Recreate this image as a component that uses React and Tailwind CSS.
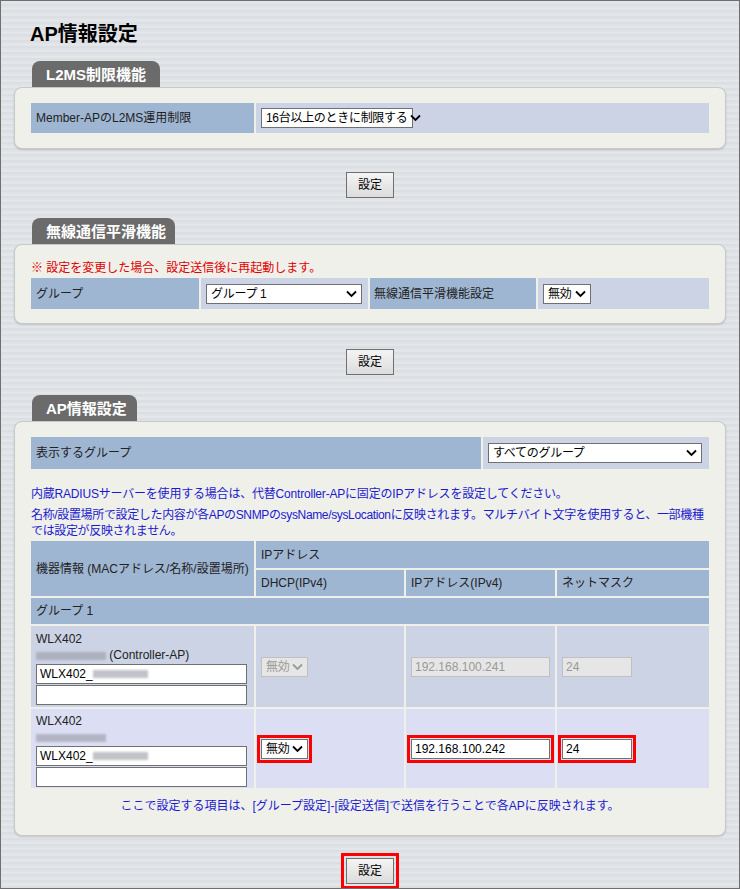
export default function App() {
  const font = { fontFamily: '"Liberation Sans","Noto Sans CJK JP",sans-serif' };
  const Tab = ({ children, w }) => (
    <div className={`ml-[18px] h-[26px] ${w} bg-[#6b6b6b] rounded-t-[8px] text-white font-bold text-[15px] flex items-center pl-[14px] leading-none`}>{children}</div>
  );
  const Panel = ({ children, cls = "" }) => (
    <div className={`bg-[#f0f0eb] border border-[#c8c8c8] rounded-[8px] shadow-[0_1px_2px_rgba(0,0,0,0.15)] px-[16px] ${cls}`}>{children}</div>
  );
  const Btn = () => (
    <button className="w-[48px] h-[26px] bg-gradient-to-b from-[#f4f4f4] to-[#dcdcdc] border border-[#707070] text-[12px] text-black">設定</button>
  );
  const Sel = ({ children, w, dis }) => (
    <div className={`h-[20px] ${w} shrink-0 whitespace-nowrap border ${dis ? "border-[#c0c0c0] bg-[#e6e6e6] text-[#999]" : "border-[#707070] bg-white text-black"} text-[12px] flex items-center justify-between gap-[3px] px-[4px]`}>
      <span className="tracking-[-0.3px]">{children}</span>
      <svg width="11" height="8" viewBox="0 0 11 8" className="shrink-0"><path d="M1 1.5 L5.5 6 L10 1.5" stroke={dis ? "#999" : "#000"} strokeWidth="1.8" fill="none" /></svg>
    </div>
  );
  const Inp = ({ children, w, dis }) => (
    <div className={`h-[20px] ${w} border ${dis ? "border-[#c0c0c0] bg-[#e6e6e6] text-[#999]" : "border-[#707070] bg-white text-black"} text-[12px] flex items-center px-[3px]`}>{children}</div>
  );
  const Blur = ({ w }) => <span className={`inline-block h-[8px] ${w} bg-[#9a9aa6] opacity-60 blur-[1px] align-middle`} />;
  return (
    <div style={font} className="w-[740px] h-[889px] overflow-hidden border border-[#6f6f6f] bg-[repeating-linear-gradient(180deg,#dfe2e6_0px,#e6e8eb_2px,#d8dbe0_4px,#e2e5e8_6px)] text-[12px] text-[#222]">
      <div className="pl-[29px] pt-[18px] h-[60px] text-[20px] font-bold text-black">AP情報設定</div>
      <div className="px-[13px]">
        <Tab w="w-[128px]">L2MS制限機能</Tab>
        <Panel cls="py-[15px]">
          <div className="flex h-[30px] gap-[2px]">
            <div className="w-[223px] bg-[#9fb6d2] flex items-center pl-[5px]">Member-APのL2MS運用制限</div>
            <div className="flex-1 bg-[#cbd3e5] flex items-center pl-[5px]"><Sel w="w-[152px]">16台以上のときに制限する</Sel></div>
          </div>
        </Panel>
        <div className="flex justify-center mt-[23px] mb-[20px]"><Btn /></div>
        <Tab w="w-[143px]">無線通信平滑機能</Tab>
        <Panel cls="pt-[14px] pb-[14px]">
          <div className="text-[#e00000] h-[19px]">※ 設定を変更した場合、設定送信後に再起動します。</div>
          <div className="flex h-[31px] gap-[2px]">
            <div className="w-[168px] bg-[#9fb6d2] flex items-center pl-[5px]">グループ</div>
            <div className="w-[167px] bg-[#cbd3e5] flex items-center pl-[5px]"><Sel w="w-[156px]">グループ 1</Sel></div>
            <div className="w-[166px] bg-[#9fb6d2] flex items-center pl-[4px]">無線通信平滑機能設定</div>
            <div className="flex-1 bg-[#cbd3e5] flex items-center pl-[5px]"><Sel w="w-[48px]">無効</Sel></div>
          </div>
        </Panel>
        <div className="flex justify-center mt-[25px] mb-[20px]"><Btn /></div>
        <Tab w="w-[105px]">AP情報設定</Tab>
        <Panel cls="pt-[15px] pb-[20px]">
          <div className="flex h-[32px] gap-[2px]">
            <div className="w-[450px] bg-[#9fb6d2] flex items-center pl-[5px]">表示するグループ</div>
            <div className="flex-1 bg-[#cbd3e5] flex items-center pl-[5px]"><Sel w="w-[214px]">すべてのグループ</Sel></div>
          </div>
          <div className="text-[#1a1ad0] mt-[17px] leading-[16px] tracking-[-0.2px]">内蔵RADIUSサーバーを使用する場合は、代替Controller-APに固定のIPアドレスを設定してください。</div>
          <div className="text-[#1a1ad0] mt-[5px] leading-[16px] tracking-[-0.35px]">名称/設置場所で設定した内容が各APのSNMPのsysName/sysLocationに反映されます。マルチバイト文字を使用すると、一部機種では設定が反映されません。</div>
          <div className="mt-[2px] grid grid-cols-[223px_148px_149px_1fr] gap-[2px]">
            <div className="row-span-2 bg-[#9fb6d2] flex items-center pl-[5px]">機器情報 (MACアドレス/名称/設置場所)</div>
            <div className="col-span-3 h-[27px] bg-[#9fb6d2] flex items-center pl-[5px]">IPアドレス</div>
            <div className="h-[26px] bg-[#9fb6d2] flex items-center pl-[5px]">DHCP(IPv4)</div>
            <div className="h-[26px] bg-[#9fb6d2] flex items-center pl-[5px]">IPアドレス(IPv4)</div>
            <div className="h-[26px] bg-[#9fb6d2] flex items-center pl-[5px]">ネットマスク</div>
            <div className="col-span-4 h-[26px] bg-[#9fb6d2] flex items-center pl-[5px]">グループ 1</div>
            <div className="h-[81px] bg-[#cbd3e5] pl-[5px] pt-[6px] flex flex-col">
              <div className="leading-[14px]">WLX402</div>
              <div className="leading-[18px]"><Blur w="w-[70px]" /> (Controller-AP)</div>
              <Inp w="w-[211px]">WLX402_<Blur w="w-[55px]" /></Inp>
              <div className="mt-[1px]"><Inp w="w-[211px]" /></div>
            </div>
            <div className="bg-[#cbd3e5] pl-[5px] flex items-center"><Sel w="w-[47px]" dis>無効</Sel></div>
            <div className="bg-[#cbd3e5] pl-[5px] flex items-center"><Inp w="w-[139px]" dis>192.168.100.241</Inp></div>
            <div className="bg-[#cbd3e5] pl-[5px] flex items-center"><Inp w="w-[70px]" dis>24</Inp></div>
            <div className="h-[79px] bg-[#dcdef3] pl-[5px] pt-[5px] flex flex-col">
              <div className="leading-[14px]">WLX402</div>
              <div className="leading-[18px]"><Blur w="w-[70px]" /></div>
              <Inp w="w-[211px]">WLX402_<Blur w="w-[55px]" /></Inp>
              <div className="mt-[1px]"><Inp w="w-[211px]" /></div>
            </div>
            <div className="bg-[#dcdef3] pl-[1px] flex items-center">
              <div className="border-[3px] border-[#ff0000] p-[1px]"><Sel w="w-[47px]">無効</Sel></div>
            </div>
            <div className="bg-[#dcdef3] pl-[1px] flex items-center">
              <div className="border-[3px] border-[#ff0000] p-[1px]"><Inp w="w-[139px]">192.168.100.242</Inp></div>
            </div>
            <div className="bg-[#dcdef3] pl-[1px] flex items-center">
              <div className="border-[3px] border-[#ff0000] p-[1px]"><Inp w="w-[70px]">24</Inp></div>
            </div>
          </div>
          <div className="text-[#1a1ad0] text-center mt-[9px]">ここで設定する項目は、[グループ設定]-[設定送信]で送信を行うことで各APに反映されます。</div>
        </Panel>
        <div className="flex justify-center mt-[17px]">
          <div className="border-[3px] border-[#ff0000] p-[2px]"><Btn /></div>
        </div>
      </div>
    </div>
  );
}
